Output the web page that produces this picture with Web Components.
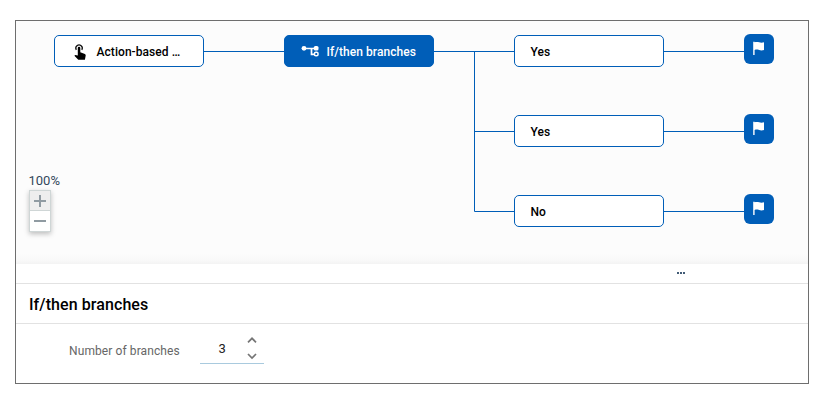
<!DOCTYPE html>
<html lang="en">
<head>
<meta charset="utf-8">
<title>If/then branches</title>
<style>
body{margin:0;padding:20px 0 0 15px;background:#fff;font-family:Roboto,"Liberation Sans",sans-serif;}
</style>
</head>
<body>
<workflow-editor></workflow-editor>
<script>
const define = (name, html) => customElements.define(name, class extends HTMLElement {
  constructor() {
    super();
    this.attachShadow({ mode: 'open' }).innerHTML = html;
  }
});

define('flow-node', `
<style>
:host{position:absolute;box-sizing:border-box;width:150px;height:32px;display:flex;align-items:center;padding:1px 14px 0 15.5px;border:1px solid #005eb8;border-radius:5px;background:#fff;color:#000;font-weight:500;font-size:12px;line-height:16px;letter-spacing:.06px;white-space:nowrap;}
:host([primary]){background:#005eb8;color:#fff;}
::slotted(svg){flex:none;display:block;}
</style>
<slot name="icon"></slot><slot></slot>`);

define('flow-end', `
<style>
:host{position:absolute;width:30px;height:30px;border-radius:6px;background:#005eb8;display:block;}
svg{display:block;}
</style>
<svg width="30" height="30" viewBox="0 0 30 30"><path d="M9.200 7.800V21h1.400v-5c1.500-.6 3-.5 4.500 0s3.200.5 4.900 0V8.300c-1.700.5-3.400.5-4.900 0s-3-.5-4.500 0v-.5z" fill="#fff"/></svg>`);

define('zoom-control', `
<style>
:host{position:absolute;left:13px;top:152px;display:flex;flex-direction:column;color:#33475b;font-size:13px;line-height:16px;}
span{margin-left:-.5px}
.b{box-sizing:border-box;width:22px;margin-top:1px;border:1px solid #cfd6d6;background:#fff;box-shadow:0 2px 5px rgba(0,0,0,.25);}
.p{height:19px;background:#eee;border-bottom:1px solid #cfd6d6}
.m{height:20px}
svg{display:block}
</style>
<span>100%</span>
<div class="b">
<div class="p"><svg width="20" height="19"><path d="M4 10h12M10 4v12" stroke="#909ba2" stroke-width="2"/></svg></div>
<div class="m"><svg width="20" height="20"><path d="M4 10h12" stroke="#909ba2" stroke-width="2"/></svg></div>
</div>`);

define('flow-canvas', `
<style>
:host{display:block;position:relative;height:243px;overflow:hidden;background:linear-gradient(#fcfcfc 0,#fcfcfc 232px,#f8f8f8 240px,#f3f3f3 243px);}
.wires{position:absolute;left:0;top:0;display:block}
</style>
<svg class="wires" width="792" height="243" fill="none" stroke="#005eb8"><path d="M188 30.500H268M418 30.500H498M648 30.500H728M458.500 30V190.500H498M458 110.500H498M648 110.500H728M648 190.500H728"/></svg>
<flow-node style="left:38px;top:14px">
<svg slot="icon" width="20" height="20" viewBox="0 0 20 20" style="margin-right:6px"><path d="M5.300 7.800a3.200 3.200 0 1 1 5.500 0" fill="none" stroke="#111" stroke-width="1.300"/><path d="M6.800 6a1.250 1.250 0 0 1 2.500 0v4.200l4.600 1.700q1 .5.800 1.500l-.8 4.300H7.300L3.400 13.800l.8-.9L6.800 13.600z" fill="#000"/></svg>Action-based …</flow-node>
<flow-node primary style="left:268px;top:14px">
<svg slot="icon" width="20" height="20" viewBox="0 0 20 20" style="margin-right:6px"><path d="M3 6.500H15M10.500 6.500V12.300H14" fill="none" stroke="#fff" stroke-width="1.700"/><circle cx="3" cy="6.300" r="2.400" fill="#fff"/><rect x="12.800" y="3.900" width="4.700" height="4.700" rx="1.600" fill="#fff"/><rect x="13.500" y="10.300" width="3.500" height="3.500" rx="1.300" fill="none" stroke="#fff" stroke-width="1.500"/></svg>If/then branches</flow-node>
<flow-node style="left:498px;top:14px">Yes</flow-node>
<flow-node style="left:498px;top:94px">Yes</flow-node>
<flow-node style="left:498px;top:174px">No</flow-node>
<flow-end style="left:728px;top:13px"></flow-end>
<flow-end style="left:728px;top:93px"></flow-end>
<flow-end style="left:728px;top:173px"></flow-end>
<zoom-control></zoom-control>`);

define('resize-bar', `
<style>
:host{display:flex;box-sizing:border-box;height:20px;padding:8px 0 0 661px;border-bottom:1px solid #e2e2e2;background:#fff;}
svg{display:block}
</style>
<svg width="9" height="2" fill="#425b76"><path d="M0 0h2v2H0zM3 0h2v2H3zM6 0h2v2H6z"/></svg>`);

define('number-stepper', `
<style>
:host{display:flex;box-sizing:border-box;width:64px;height:33px;border-bottom:1px solid #a9cade;color:#222;font-size:13px;line-height:16px;}
span{width:44px;box-sizing:border-box;padding:10px 0 0 18.500px}
svg{display:block}
</style>
<span><slot></slot></span>
<svg width="18" height="32" fill="none" stroke="#757575" stroke-width="1.700"><path d="M4 11.300l4-4 4 4M4 23l4 4 4-4"/></svg>`);

define('branch-settings', `
<style>
:host{display:block}
h2{margin:0;box-sizing:border-box;height:40px;padding:11px 13px 0;border-bottom:1px solid #e2e2e2;color:#000;font-weight:500;font-size:16px;line-height:20px;letter-spacing:.08px}
.row{display:flex;padding:7px 0 0 53px}
label{width:131px;padding-top:12px;color:#666;font-size:12px;line-height:16px;letter-spacing:.1px}
</style>
<h2>If/then branches</h2>
<div class="row"><label>Number of branches</label><number-stepper>3</number-stepper></div>`);

define('workflow-editor', `
<style>
:host{display:block;box-sizing:border-box;width:794px;height:364px;border:1px solid #6e6e6e;background:#fff;overflow:hidden;}
</style>
<flow-canvas></flow-canvas><resize-bar></resize-bar><branch-settings></branch-settings>`);
</script>
</body>
</html>
